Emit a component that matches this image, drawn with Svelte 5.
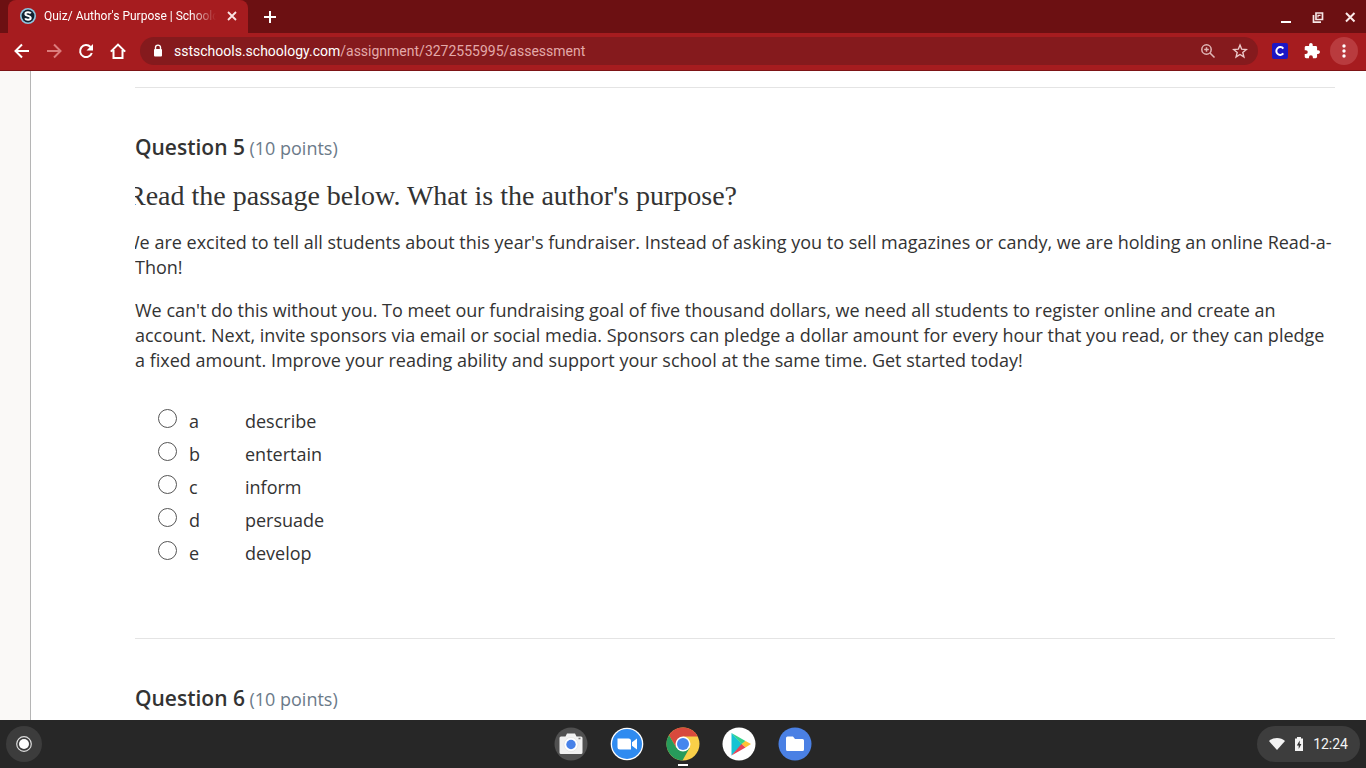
<script lang="ts">
	interface Option {
		letter: string,
		label: string,
	}

	const options: Option[] = [
		{ letter: "a", label: "describe" },
		{ letter: "b", label: "entertain" },
		{ letter: "c", label: "inform" },
		{ letter: "d", label: "persuade" },
		{ letter: "e", label: "develop" },
	];

	let answer = $state("");
</script>

<div class="screen">
	<header class="tabstrip">
		<div class="tab">
			<svg class="favicon" viewBox="0 0 16 16" width="16" height="16">
				<circle cx="8" cy="8" r="8" fill="#8fc6e0" />
				<circle cx="8" cy="8" r="6.4" fill="#12212f" />
				<path d="M10.8 5.400C9.800 3.800 5.400 3.800 5.400 6c0 2.300 5.300 1.500 5.300 3.900 0 2.400-4.700 2.300-5.600.5" fill="none" stroke="#fff" stroke-width="2" />
			</svg>
			<span class="tab-title">Quiz/ Author's Purpose | Schoology</span>
			<button class="icon" aria-label="Close tab">
				<svg viewBox="0 0 16 16" width="16" height="16"><path d="M4 4l8 8M12 4l-8 8" stroke="#fbe3e3" stroke-width="1.800" /></svg>
			</button>
		</div>
		<button class="icon new-tab" aria-label="New tab">
			<svg viewBox="0 0 16 16" width="16" height="16"><path d="M8 2v12M2 8h12" stroke="#fff" stroke-width="2" /></svg>
		</button>
		<div class="window-buttons">
			<button class="icon" aria-label="Minimize">
				<svg viewBox="0 0 16 16" width="16" height="16"><path d="M3 13h10" stroke="#fff" stroke-width="2" /></svg>
			</button>
			<button class="icon" aria-label="Restore">
				<svg viewBox="0 0 16 16" width="16" height="16" fill="none" stroke="#f6e6e6" stroke-width="1.700"><path d="M6 4h6.500v6.500H6zM3.500 6v7.200H11" /><path d="M8 8.500V6.300h2.500" stroke-width="1.200" /></svg>
			</button>
			<button class="icon" aria-label="Close">
				<svg viewBox="0 0 16 16" width="16" height="16"><path d="M4 4l8.500 8.500M12.500 4L4 12.500" stroke="#fbe9e9" stroke-width="2" /></svg>
			</button>
		</div>
	</header>

	<nav class="toolbar">
		<button class="icon" aria-label="Back">
			<svg viewBox="0 0 16 16" width="16" height="16" fill="none" stroke="#fff" stroke-width="2"><path d="M15 8H2M8 1.500L1.500 8 8 14.500" /></svg>
		</button>
		<button class="icon" aria-label="Forward" disabled>
			<svg viewBox="0 0 16 16" width="16" height="16" fill="none" stroke="#dc7c7c" stroke-width="2"><path d="M1 8h13M8 1.500L14.500 8 8 14.500" /></svg>
		</button>
		<button class="icon" aria-label="Reload">
			<svg viewBox="0 0 16 16" width="16" height="16"><path d="M13.800 10A6 6 0 1 1 12.500 4" fill="none" stroke="#fff" stroke-width="2" /><path d="M15 1v6.500H8.500z" fill="#fff" /></svg>
		</button>
		<button class="icon" aria-label="Home">
			<svg viewBox="0 0 16 16" width="16" height="16" fill="none" stroke="#fff" stroke-width="2"><path d="M.8 8.600L8 1.600l7.200 7M3.500 7v8h9V7" /></svg>
		</button>
		<div class="omnibox">
			<svg viewBox="0 0 16 16" width="16" height="16"><path d="M5.500 7V4.600a2.500 2.500 0 0 1 5 0V7" fill="none" stroke="#fff" stroke-width="1.400" /><rect x="4" y="6" width="8" height="7.500" rx="1" fill="#fff" /></svg>
			<a class="url" href="#assessment">sstschools.schoology.com<span>/assignment/3272555995/assessment</span></a>
			<button class="icon" aria-label="Zoom">
				<svg viewBox="0 0 16 16" width="16" height="16" fill="none" stroke="#e0b6b6" stroke-width="1.500"><circle cx="6.500" cy="6.500" r="4.700" /><path d="M10 10l4.500 4.500M4.200 6.500h4.600M6.500 4.200v4.600" /></svg>
			</button>
			<button class="icon" aria-label="Bookmark this page">
				<svg viewBox="0 0 16 16" width="16" height="16"><path d="M8 2l1.700 4.200 4.600.3-3.500 3 1.100 4.400L8 11.500l-3.900 2.400 1.100-4.400-3.500-3 4.600-.3z" fill="none" stroke="#edcaca" stroke-width="1.400" /></svg>
			</button>
		</div>
		<button class="icon" aria-label="Clever">
			<svg viewBox="0 0 16 16" width="16" height="16"><rect width="16" height="16" rx="2" fill="#1c16c4" /><path d="M11.300 5.600A3.900 3.900 0 1 0 11.300 10.400" fill="none" stroke="#fff" stroke-width="2" /></svg>
		</button>
		<button class="icon" aria-label="Extensions">
			<svg viewBox="1 1 22 22" width="16" height="16"><path fill="#fff" d="M20.500 11H19V7a2 2 0 0 0-2-2h-4V3.500a2.500 2.500 0 0 0-5 0V5H4a2 2 0 0 0-2 2v3.800h1.500a2.700 2.700 0 0 1 0 5.400H2V20c0 1.100.9 2 2 2h3.800v-1.500a2.700 2.700 0 0 1 5.400 0V22H17a2 2 0 0 0 2-2v-4h1.500a2.500 2.500 0 0 0 0-5z" /></svg>
		</button>
		<button class="icon menu" aria-label="Menu">
			<svg viewBox="0 0 16 16" width="16" height="16" fill="#fff"><circle cx="8" cy="3" r="1.700" /><circle cx="8" cy="8" r="1.700" /><circle cx="8" cy="13" r="1.700" /></svg>
		</button>
	</nav>

	<main class="page">
		<div class="sheet">
			<section class="question">
				<h2>Question 5 <small>(10 points)</small></h2>
				<div class="passage">
					<p class="prompt">Read the passage below. What is the author's purpose?</p>
					<p class="lead">We are excited to tell all students about this year's fundraiser. Instead of asking you to sell magazines or candy, we are holding an online Read-a-Thon!</p>
					<p>We can't do this without you. To meet our fundraising goal of five thousand dollars, we need all students to register online and create an account. Next, invite sponsors via email or social media. Sponsors can pledge a dollar amount for every hour that you read, or they can pledge a fixed amount. Improve your reading ability and support your school at the same time. Get started today!</p>
				</div>
				<div class="options">
					{#each options as option}
						<label class="option">
							<input type="radio" name="question-5" value={option.letter} bind:group={answer} />
							<span>{option.letter}</span>
							<span>{option.label}</span>
						</label>
					{/each}
				</div>
			</section>
			<section class="question">
				<h2>Question 6 <small>(10 points)</small></h2>
			</section>
		</div>
	</main>

	<footer class="shelf">
		<button class="icon launcher" aria-label="Launcher">
			<svg viewBox="0 0 36 36" width="36" height="36"><circle cx="18" cy="18" r="18" fill="#3c3c3c" /><circle cx="18" cy="18" r="7.300" fill="none" stroke="#ddd" stroke-width="1.200" /><circle cx="18" cy="18" r="5" fill="#fff" /></svg>
		</button>
		<div class="apps">
			<button class="icon" aria-label="Camera">
				<svg viewBox="0 0 34 34" width="34" height="34"><circle cx="17" cy="17" r="16.500" fill="#505050" /><path d="M7 9.500h4.500l1.500-3h8l1.500 3H27a1.500 1.500 0 0 1 1.500 1.500v14.500A1.500 1.500 0 0 1 27 27H7a1.500 1.500 0 0 1-1.500-1.500V11A1.500 1.500 0 0 1 7 9.500z" fill="#f1f1f1" /><circle cx="17" cy="17.500" r="7" fill="#fff" stroke="#ddd" stroke-width=".6" /><circle cx="17" cy="17.500" r="4.700" fill="#4781e8" /><path d="M24.500 11.500h2" stroke="#777" stroke-width="1.500" /></svg>
			</button>
			<button class="icon" aria-label="Zoom meetings">
				<svg viewBox="0 0 34 34" width="34" height="34"><circle cx="17" cy="17" r="16.300" fill="#fff" /><circle cx="17" cy="17" r="15" fill="#2f8bf0" /><path d="M7.500 11.500h11a2.500 2.500 0 0 1 2.500 2.500v8.500H10A2.500 2.500 0 0 1 7.500 20zM22 15.300l5-3.800v11l-5-3.800z" fill="#fff" /></svg>
			</button>
			<button class="icon active" aria-label="Chrome">
				<svg viewBox="0 0 34 34" width="34" height="34"><circle cx="17" cy="17" r="16.500" fill="#f9cf48" /><path d="M17 9.500h14.700A16.500 16.500 0 0 0 3 8.300L10.500 21z" fill="#d84a3d" /><path d="M3 8.300A16.500 16.500 0 0 0 16.500 33.500L23.500 21 10.500 21z" fill="#279b5b" /><circle cx="17" cy="17" r="7.500" fill="#fff" /><circle cx="17" cy="17" r="6" fill="#4586ee" /></svg>
			</button>
			<button class="icon" aria-label="Play Store">
				<svg viewBox="0 0 34 34" width="34" height="34"><circle cx="17" cy="17" r="16.500" fill="#fff" /><path d="M9.500 6v22.500l11-11z" fill="#16c3d3" /><path d="M9.500 6l14 8-3.500 3.500z" fill="#35d38b" /><path d="M23.500 14l5.500 3-5.500 3.500-4-3.500z" fill="#ffc334" /><path d="M9.500 28.500l14-8-4-3.500z" fill="#e94357" /></svg>
			</button>
			<button class="icon" aria-label="Files">
				<svg viewBox="0 0 34 34" width="34" height="34"><circle cx="17" cy="17" r="16.500" fill="#4a80e4" /><path d="M9.500 9.500h5.500l2 2.500h7.500a1.500 1.500 0 0 1 1.500 1.500v9a1.500 1.500 0 0 1-1.500 1.500h-15A1.500 1.500 0 0 1 8 22.500V11a1.500 1.500 0 0 1 1.500-1.500z" fill="#fff" /></svg>
			</button>
		</div>
		<button class="tray">
			<svg viewBox="0 0 16 16" width="16" height="16"><path d="M0 5C4 1 12 1 16 5L8 14z" fill="#f3f3f3" /></svg>
			<svg viewBox="0 0 10 16" width="10" height="16"><path d="M3 1h4v1.500h2V15H1V2.500h2z" fill="#f3f3f3" /><path d="M5.700 4.500L2.800 9.500h1.900v3.500l2.700-5H5.700z" fill="#333" /></svg>
			<time>12:24</time>
		</button>
	</footer>
</div>

<style>
	:global(body) {
		margin: 0;
	}
	.screen {
		height: 100vh;
		display: flex;
		flex-direction: column;
		overflow: hidden;
		font-family: "Open Sans", sans-serif;
		color: #333;
	}
	.icon {
		display: flex;
		padding: 0;
		border: 0;
		background: none;
	}
	svg {
		display: block;
		flex: none;
	}

	/* browser frame */
	.tabstrip {
		flex: none;
		display: flex;
		align-items: center;
		box-sizing: border-box;
		height: 33px;
		padding: 0 8px;
		background: #6c1012;
		font-family: Roboto, sans-serif;
	}
	.tab {
		display: flex;
		align-items: center;
		align-self: stretch;
		gap: 8px;
		box-sizing: border-box;
		width: 240px;
		padding: 0 8px 2px 12px;
		border-radius: 8px 8px 0 0;
		background: #a61c1f;
		color: #fff;
		font-size: 12px;
	}
	.tab-title {
		flex: 1;
		overflow: hidden;
		white-space: nowrap;
		mask-image: linear-gradient(to right, #000 85%, transparent);
	}
	.new-tab {
		margin-left: 14px;
	}
	.window-buttons {
		display: flex;
		gap: 16px;
		margin-left: auto;
	}
	.toolbar {
		flex: none;
		display: flex;
		align-items: center;
		gap: 16px;
		box-sizing: border-box;
		height: 38px;
		padding: 0 8px 1px 14px;
		background: #a61c1f;
		border-bottom: 1px solid #7d1416;
	}
	.omnibox {
		flex: 1;
		display: flex;
		align-items: center;
		gap: 16px;
		height: 28px;
		margin: 0 -2px;
		padding: 0 10px;
		border-radius: 14px;
		background: #851a1d;
	}
	.url {
		flex: 1;
		margin-left: -8px;
		font-family: Roboto, sans-serif;
		font-size: 14px;
		color: #fff;
		text-decoration: none;
	}
	.url span {
		color: #e3a9a9;
	}
	.menu {
		margin-left: -6px;
		padding: 6px;
		border-radius: 50%;
		background: #b93b3e;
	}

	/* quiz page */
	.page {
		flex: 1;
		min-height: 0;
		overflow: hidden;
		padding-left: 30px;
		background: #faf9f7;
	}
	.sheet {
		min-height: 100%;
		box-sizing: border-box;
		padding: 16px 31px 0 104px;
		border-left: 1px solid #b5b5b5;
		background: #fff;
	}
	.question {
		padding: 44px 0 68px;
		border-top: 1px solid #e4e4e4;
	}
	h2 {
		margin: 0;
		font-size: 21px;
		font-weight: 600;
		line-height: 30px;
	}
	h2 small {
		margin-left: -1px;
		font-size: 18px;
		font-weight: 400;
		color: #6b7a89;
	}
	.passage {
		overflow: hidden;
		font-size: 18px;
		line-height: 25px;
	}
	p {
		margin: 18px 0;
	}
	/* the hanging indent runs under the edge of the passage */
	.prompt {
		margin-top: 16px;
		font-family: "Liberation Serif", serif;
		font-size: 28px;
		line-height: 33px;
		text-indent: -8px;
	}
	.lead {
		text-indent: -12px;
	}
	.options {
		display: grid;
		margin-top: 14px;
		padding-left: 23px;
	}
	.option {
		display: grid;
		grid-template-columns: 31px 56px 1fr;
		font-size: 18px;
		line-height: 33px;
	}
	input {
		appearance: none;
		box-sizing: border-box;
		width: 19px;
		height: 19px;
		margin: 4px 0 0;
		border: 1px solid #555;
		border-radius: 50%;
		background: #fff;
	}
	input:checked {
		border-width: 6px;
	}

	/* system shelf */
	.shelf {
		flex: none;
		display: grid;
		grid-template-columns: 1fr auto 1fr;
		align-items: center;
		height: 48px;
		padding: 0 6px;
		background: #272727;
	}
	.apps {
		display: flex;
		gap: 22px;
	}
	.active {
		position: relative;
	}
	.active::after {
		content: "";
		position: absolute;
		left: 12px;
		bottom: -5px;
		width: 10px;
		height: 2px;
		background: #fff;
	}
	.tray {
		display: flex;
		align-items: center;
		justify-self: end;
		gap: 9px;
		height: 36px;
		padding: 0 12px;
		border: 0;
		border-radius: 18px;
		background: #3d3d3d;
		color: #f3f3f3;
		font-family: Roboto, sans-serif;
		font-size: 14px;
	}
</style>
